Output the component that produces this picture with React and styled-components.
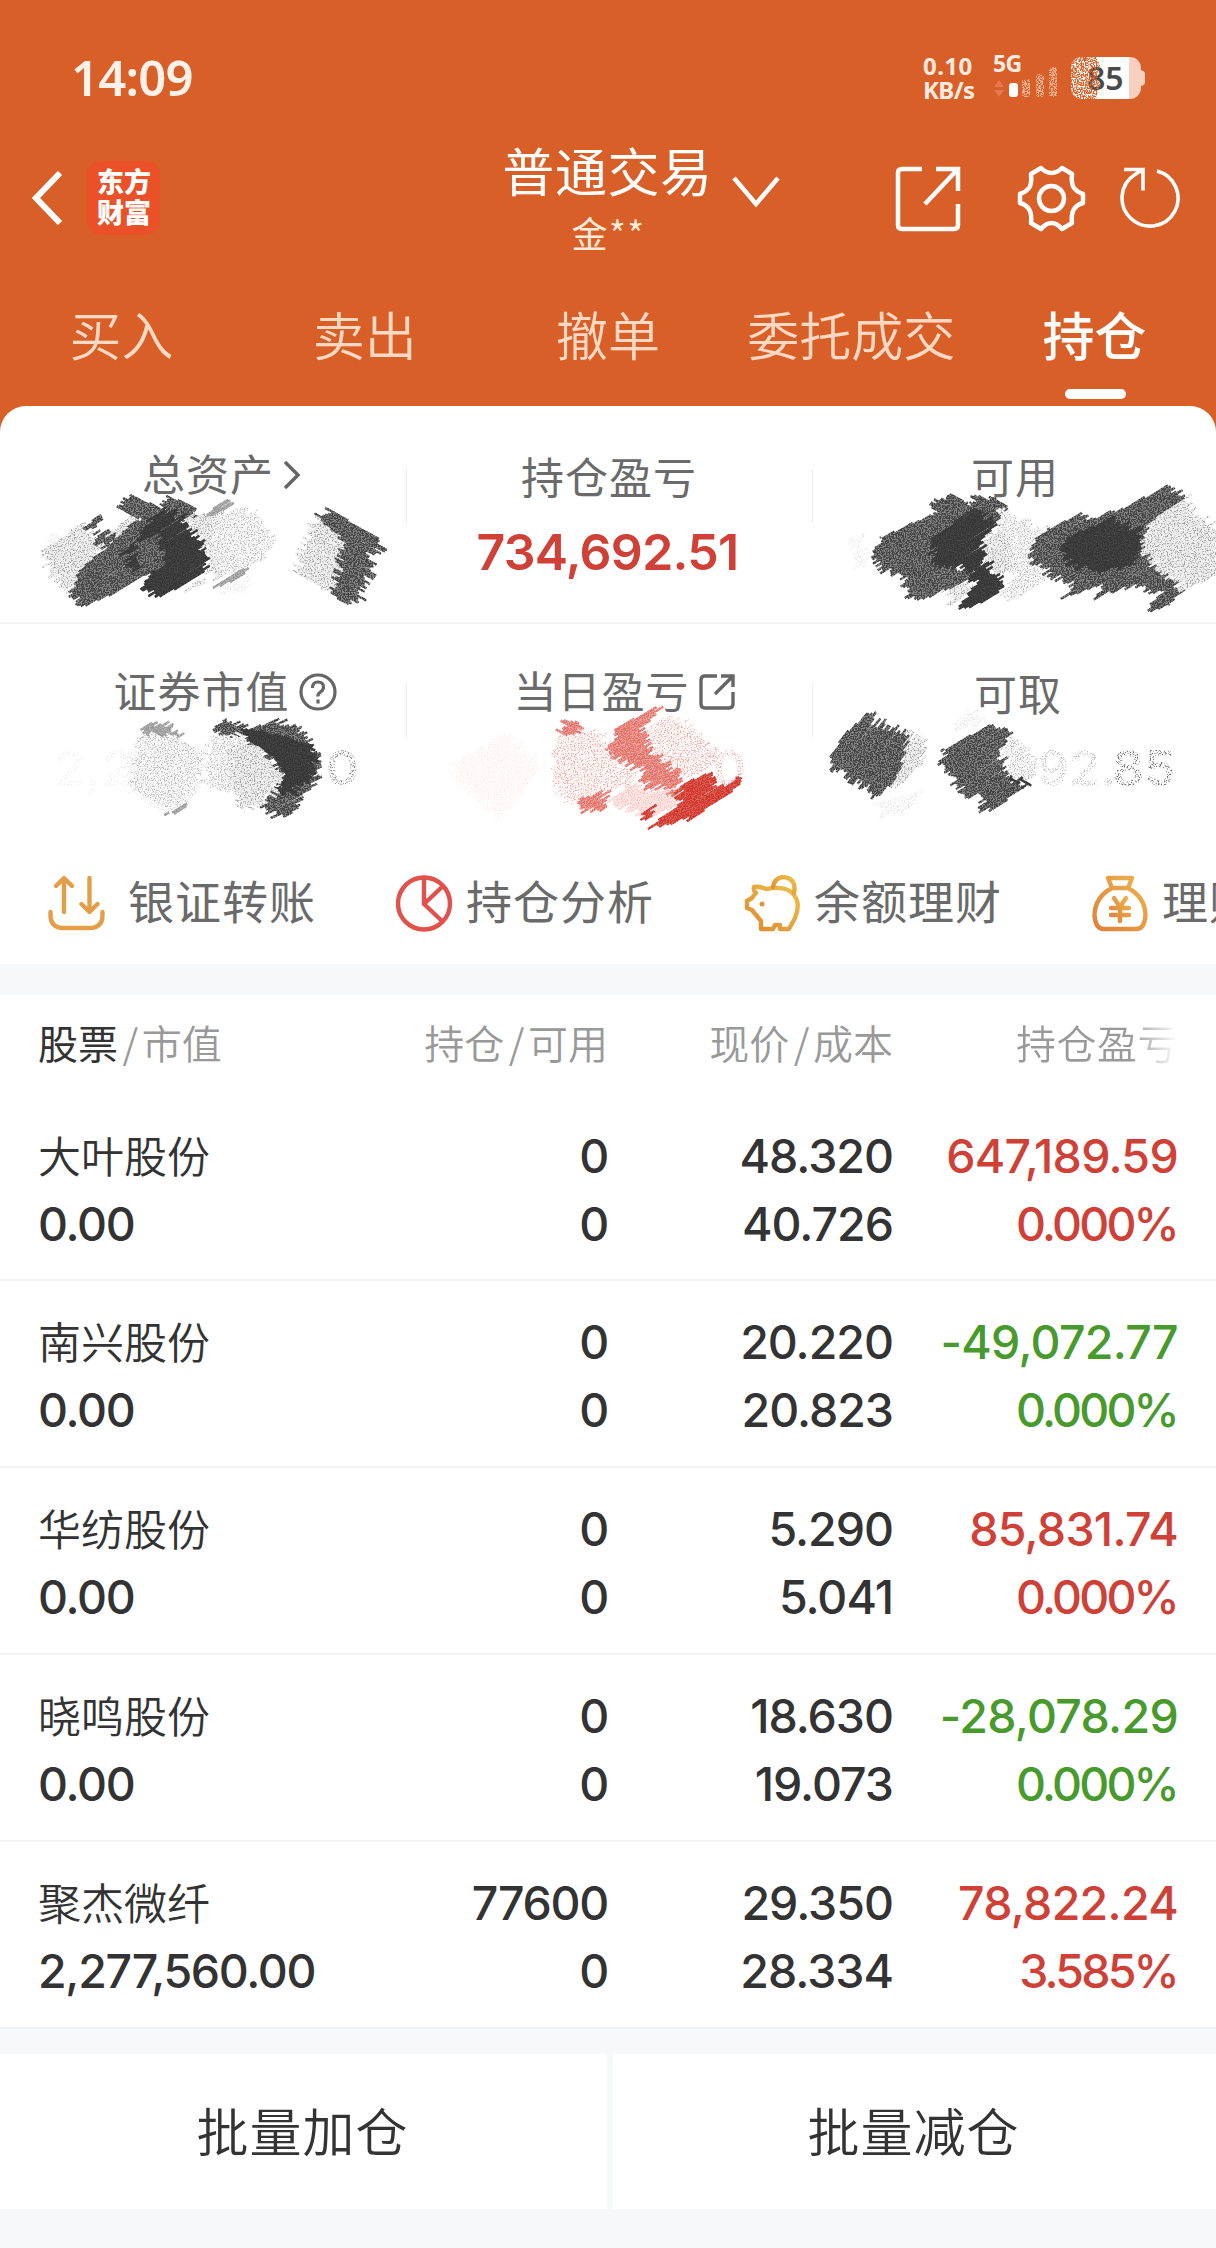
import React from 'react';
import styled, { createGlobalStyle } from 'styled-components';

const GlobalStyle = createGlobalStyle`
  * {
    box-sizing: border-box;
  }

  body {
    margin: 0;
    background: #f6f8fa;
    font-family: "Noto Sans CJK SC", "Noto Sans", sans-serif;
    color: #333;
  }
`;

const Page = styled.div`
  width: 1216px;
  height: 2248px;
  overflow: hidden;
  display: flex;
  flex-direction: column;
`;

/* ---------- Header ---------- */

const Header = styled.header`
  background: #d85f27;
  height: 436px; // The summary card overlaps the last 30px
  flex: none;
  color: #fff;
`;

const StatusBar = styled.div`
  height: 130px;
  padding: 26px 71px 0 71px;
  display: flex;
  align-items: center;
`;

const Clock = styled.span`
  font: 600 49px/60px "Noto Sans", sans-serif;
  letter-spacing: -0.8px;
  color: #fff1ea;
  margin-right: auto;
  padding-bottom: 2px;
`;

const NetSpeed = styled.div`
  font: 700 24px/24px "Noto Sans", sans-serif;
  letter-spacing: -0.6px;
  color: #ffeae0;
  width: 50px;
  white-space: nowrap;
  margin-right: 20px;

  span {
    display: block;
  }

  span:first-child {
    letter-spacing: 0.4px;
  }
`;

const SignalBlock = styled.div`
  width: 66px;
  height: 54px;
  margin-right: 12px;
  flex: none;
  display: grid;
`;

// 5G label sits in the corner above the signal bars
const SignalLabel = styled.div`
  grid-area: 1 / 1;
  font: 700 23px/24px "Noto Sans", sans-serif;
  letter-spacing: -0.6px;
  color: #ffeae0;
`;

const SignalBars = styled.svg`
  grid-area: 1 / 1;
  width: 66px;
  height: 50px;
  margin-top: 3px;
`;

const Battery = styled.svg`
  width: 74px;
  height: 44px;
  flex: none;
`;

const NavBar = styled.div`
  height: 140px;
  padding: 0 36px 0 32px;
  display: flex;
`;

const NavSide = styled.div`
  flex: 1;
  display: flex;
  align-items: center;
  padding-bottom: 5px;
`;

const Logo = styled.div`
  width: 73px;
  height: 74px;
  margin-left: 24px;
  padding: 4px 0 0 10px;
  border-radius: 14px;
  background: #ea5128;
  font-size: 27px;
  font-weight: 900;
  line-height: 31px;
`;

const TitleBlock = styled.div`
  width: 212px;
  padding: 8px 0 0 3px;
  display: flex;
  flex-direction: column;
  align-items: center;
  white-space: nowrap;
`;

const Title = styled.div`
  font-size: 52px;
  font-weight: 400;
  line-height: 64px;
  letter-spacing: 0.6px;
`;

const SubTitle = styled.div`
  font-size: 36px;
  line-height: 44px;
  padding: 8px 0 0 2px;
  letter-spacing: 1.5px;
  color: #ffe9d9;
`;

const NavIcon = styled.svg`
  width: ${(p) => p.$w}px;
  height: ${(p) => p.$h}px;
  margin-left: ${(p) => p.$ml || 0};
  margin-top: ${(p) => p.$mt || 0}px;
  fill: none;
  stroke: #fff;
  stroke-width: ${(p) => p.$stroke || 4.5};
  flex: none;
`;

const Tabs = styled.nav`
  display: grid;
  grid-template-columns: repeat(5, 1fr);
`;

const Tab = styled.div`
  display: flex;
  flex-direction: column;
  align-items: center;
  padding-top: 32px;
  font-size: 52px;
  line-height: 64px;
  font-weight: ${(p) => (p.$active ? 500 : 350)};
  color: ${(p) => (p.$active ? '#fff' : '#ffd9c3')};

  &::after {
    content: '';
    width: 61px;
    height: 10px;
    margin: 23px 0 0 2px;
    border-radius: 5px;
    background: ${(p) => (p.$active ? '#fff' : 'transparent')};
  }
`;

/* ---------- Summary ---------- */

const Summary = styled.section`
  position: relative;
  height: 558px;
  margin-top: -30px;
  flex: none;
  border-radius: 26px 26px 0 0;
  background: #fff;
  overflow: hidden;
`;

const SummaryRow = styled.div`
  display: grid;
  grid-template-columns: 407px 406px 403px;
  height: ${(p) => p.$height}px;
  padding-top: ${(p) => p.$top}px;
  border-bottom: ${(p) => (p.$line ? '2px solid #f2f2f3' : 'none')};
`;

const SummaryCell = styled.div`
  display: flex;
  flex-direction: column;
  align-items: center;
  background: linear-gradient(#ececec, #ececec) no-repeat right 28px / ${(p) => (p.$last ? 0 : 1)}px 54px;
`;

const SummaryLabel = styled.div`
  display: flex;
  align-items: center;
  height: 68px;
  margin-top: ${(p) => p.$shift || 0}px;
  padding-left: ${(p) => p.$indent || 0}px;
  padding-right: ${(p) => (p.$indent ? 0 : 2)}px;
  font-size: 43px;
  font-weight: 400;
  letter-spacing: 1px;
  color: #6a6a6a;

  svg {
    fill: none;
    stroke: #666;
    margin: 5px 0 0 9px;
  }
`;

const SummaryValue = styled.div`
  font: 600 50px/60px Inter, sans-serif;
  letter-spacing: -0.7px;
  color: #cf4037;
  margin-top: 13px;
  padding-right: 5px;
`;

const ScribbleLayer = styled.svg`
  position: absolute;
  left: 0;
  top: 0;
  width: 1216px;
  height: 558px;
  pointer-events: none;
`;

const HiddenDigits = styled.text`
  font: 600 50px Inter, sans-serif;
  fill: ${(p) => p.$color};
`;

const Actions = styled.div`
  display: flex;
  height: 118px;
  padding-left: 48px;
  align-items: center;
`;

const Action = styled.div`
  flex: 0 0 348px;
  display: flex;
  align-items: center;
  gap: ${(p) => p.$gap}px;
  font-size: 46px;
  letter-spacing: 1px;
  font-weight: 400;
  color: #6a6a6a;
  white-space: nowrap;

  svg {
    width: 57px;
    height: 57px;
    fill: none;
    stroke-width: 4.4;
    stroke-linecap: round;
    stroke-linejoin: round;
    flex: none;
  }

  span {
    padding-bottom: 8px;
  }
`;

/* ---------- Holdings ---------- */

const Holdings = styled.section`
  margin-top: 31px;
  height: 1033px;
  flex: none;
  background: #fff;
`;

const HoldingsHead = styled.div`
  display: grid;
  grid-template-columns: repeat(4, 285px);
  height: 99.7px;
  padding: 18px 38px 0;
  font-size: 40px;
  line-height: 58px;
  font-weight: 350;
  color: #999;

  span {
    text-align: right;
  }

  span:first-child {
    text-align: left;
  }

  b {
    font-weight: 400;
    color: #333;
  }

  i {
    font-style: normal;
    padding: 0 3.5px 0 4.5px;
  }
`;

const FadingLabel = styled.span`
  background: linear-gradient(90deg, #999 70%, #f4f4f4 97%);
  background-clip: text;
  color: transparent;
  letter-spacing: 0.5px;
`;

const HoldingRow = styled.div`
  display: grid;
  grid-template-columns: repeat(4, 285px);
  height: 186.8px;
  padding: 27px 38px 0;
  border-bottom: 2px solid #f3f3f4;
`;

const Pair = styled.div`
  display: flex;
  flex-direction: column;
  align-items: ${(p) => (p.$left ? 'flex-start' : 'flex-end')};
  font: 550 46.5px/68px Inter, sans-serif;
  letter-spacing: ${(p) => p.$spacing || -1.3}px;
  white-space: nowrap;
  color: ${(p) => p.$color || '#333'};
`;

const Percent = styled.span`
  letter-spacing: -2.8px;
  padding-right: 1px;
`;

const StockName = styled.span`
  font: 350 43px/64px "Noto Sans CJK SC", sans-serif;
  letter-spacing: 0;
  height: 68px;
`;

const Footer = styled.footer`
  display: grid;
  grid-template-columns: 607px 603px;
  gap: 6px;
  margin-top: 26px;
  height: 155px;
`;

const FooterButton = styled.button`
  border: 0;
  padding: 0 2px 4px 0;
  background: #fff;
  font: 350 52px "Noto Sans CJK SC", sans-serif;
  letter-spacing: 1px;
  color: #333;
`;

/* ---------- Data ---------- */

const RED = '#cf4037';
const GREEN = '#489a2c';

const tabs = ['买入', '卖出', '撤单', '委托成交', '持仓'];

const holdings = [
  { name: '大叶股份', value: '0.00', qty: '0', free: '0', price: '48.320', cost: '40.726', pnl: '647,189.59', pct: '0.000%', color: RED },
  { name: '南兴股份', value: '0.00', qty: '0', free: '0', price: '20.220', cost: '20.823', pnl: '-49,072.77', pct: '0.000%', color: GREEN },
  { name: '华纺股份', value: '0.00', qty: '0', free: '0', price: '5.290', cost: '5.041', pnl: '85,831.74', pct: '0.000%', color: RED },
  { name: '晓鸣股份', value: '0.00', qty: '0', free: '0', price: '18.630', cost: '19.073', pnl: '-28,078.29', pct: '0.000%', color: GREEN },
  { name: '聚杰微纤', value: '2,277,560.00', qty: '77600', free: '0', price: '29.350', cost: '28.334', pnl: '78,822.24', pct: '3.585%', color: RED },
];

// Pencil tones: base stroke color, grain color, grain filter
const tones = {
  dark: ['#858585', '#404040', 'dense'],
  solid: ['#444', '#353535', 'dense'],
  mid: ['#b4b4b4', '#999', 'dense'],
  light: ['#f0f0f0', '#a2a2a2', 'sparse'],
  haze: ['#f8f8f8', '#bebebe', 'sparse'],
  faint: ['#fdfdfd', '#e6e6e6', 'sparse'],
  deep: ['#dd5e55', '#cf352b', 'dense'],
  red: ['#efa09a', '#e27168', 'dense'],
  pale: ['#fbe4e2', '#f3c4c1', 'sparse'],
  pink: ['#fffafa', '#eea9a4', 'sparse'],
  blush: ['#fffdfd', '#fdecea', 'sparse'],
};

// Each group is drawn at 3x: [tone, angle, x1,y1, x2,y2, ...]
const scribbles = [
  {
    x: 0, y: -6,
    patches: [
      ['faint', -32, 650, 560, 750, 530, 740, 585, 680, 580],
      ['faint', -32, 130, 430, 160, 400, 180, 410, 150, 435],
      ['light', -32, 125, 450, 255, 365, 300, 440, 250, 540, 215, 575, 150, 520],
      ['light', -32, 325, 405, 400, 335, 430, 370, 340, 435],
      ['dark', -32, 250, 500, 400, 370, 480, 330, 440, 520, 380, 560, 260, 615, 205, 595],
      ['dark', -32, 250, 390, 295, 350, 300, 365, 270, 390],
      ['dark', -32, 290, 390, 340, 410, 330, 450, 290, 430],
      ['dark', 28, 350, 325, 405, 287, 480, 325, 460, 370, 400, 345],
      ['dark', 28, 480, 295, 540, 295, 595, 335, 560, 370, 500, 335],
      ['mid', -32, 610, 350, 680, 293, 710, 298, 640, 365],
      ['light', -32, 560, 350, 680, 340, 720, 400, 720, 470, 650, 540, 620, 500, 620, 430, 570, 390],
      ['haze', -32, 640, 350, 740, 320, 815, 410, 800, 480, 660, 530, 640, 450],
      ['light', -32, 555, 560, 620, 530, 610, 550, 570, 570],
      ['mid', -32, 640, 563, 735, 503, 742, 520, 690, 553],
      ['solid', -32, 370, 460, 430, 400, 450, 360, 500, 320, 545, 350, 550, 380, 580, 400, 625, 460, 622, 510, 540, 560, 460, 600, 430, 560, 460, 520, 390, 510],
      ['dark', -32, 410, 430, 470, 410, 500, 460, 470, 520, 430, 515, 400, 480],
      ['light', 28, 935, 370, 960, 350, 1060, 430, 1010, 560, 990, 580, 890, 520, 905, 460],
      ['dark', 28, 955, 350, 990, 330, 1125, 405, 1145, 440, 1110, 470, 1120, 495, 1080, 603, 1030, 605, 990, 580, 1020, 480, 1025, 410],
    ],
  },
  {
    x: 800, y: -6,
    patches: [
      ['faint', -32, 150, 420, 185, 400, 200, 500, 180, 510],
      ['dark', -32, 220, 470, 245, 410, 390, 345, 430, 330, 480, 300, 530, 340, 460, 420, 480, 500, 520, 530, 440, 570, 335, 605, 310, 540, 250, 510],
      ['dark', 28, 415, 293, 470, 290, 510, 320, 530, 295, 590, 295, 625, 325, 590, 370, 420, 370, 400, 330],
      ['light', -32, 430, 570, 490, 555, 515, 570, 460, 610],
      ['haze', -32, 600, 325, 680, 360, 730, 385, 690, 470, 755, 530, 640, 605, 610, 580, 640, 530, 560, 500, 545, 450, 590, 390],
      ['light', -32, 570, 400, 620, 390, 640, 500, 610, 520, 550, 480, 545, 440],
      ['solid', -32, 395, 410, 520, 330, 590, 370, 550, 420, 550, 480, 625, 545, 590, 580, 500, 630, 480, 620, 530, 550, 490, 500, 400, 490],
      ['dark', -32, 690, 455, 730, 395, 840, 338, 860, 355, 950, 335, 1090, 260, 1125, 270, 1155, 300, 1060, 360, 1030, 420, 1060, 490, 1155, 570, 1105, 615, 1040, 635, 1080, 580, 990, 560, 885, 595, 900, 560, 790, 595, 820, 550, 760, 530, 700, 490],
      ['solid', -32, 790, 420, 930, 355, 1030, 400, 1010, 490, 900, 520, 800, 490],
      ['light', -32, 1050, 370, 1160, 290, 1180, 340, 1260, 380, 1260, 520, 1150, 570, 1100, 520, 1050, 480, 1020, 430],
    ],
  },
  {
    x: 0, y: 234,
    patches: [
      ['faint', -32, 370, 340, 420, 330, 620, 320, 600, 440, 560, 500, 480, 520, 390, 450],
      ['mid', -32, 418, 300, 440, 250, 490, 250, 540, 285, 520, 315, 450, 290],
      ['haze', 28, 415, 310, 450, 280, 530, 290, 610, 340, 600, 400, 540, 500, 510, 510, 395, 445, 400, 370],
      ['mid', -32, 500, 520, 555, 490, 560, 500, 525, 525],
      ['dark', -25, 635, 270, 685, 235, 750, 265, 830, 240, 885, 265, 920, 300, 960, 365, 955, 410, 900, 490, 870, 528, 825, 528, 780, 500, 840, 430, 850, 400, 770, 330, 720, 290, 650, 285],
      ['solid', 28, 740, 265, 860, 290, 940, 320, 950, 390, 880, 460, 830, 470, 850, 400, 830, 360, 730, 290],
      ['haze', 28, 615, 340, 640, 285, 735, 285, 760, 350, 720, 470, 620, 440],
      ['light', 28, 700, 310, 760, 310, 800, 350, 840, 400, 825, 450, 785, 495, 720, 510, 690, 430],
    ],
  },
  {
    x: 400, y: 234,
    patches: [
      ['blush', -38, 150, 380, 310, 280, 430, 380, 300, 540, 200, 450],
      ['pink', -32, 455, 330, 480, 290, 600, 270, 650, 360, 700, 380, 700, 430, 620, 450, 520, 490, 470, 450],
      ['red', 28, 465, 275, 515, 238, 560, 255, 500, 285],
      ['red', -32, 525, 490, 560, 512, 605, 510, 620, 450, 560, 465],
      ['pale', -32, 630, 480, 700, 430, 760, 450, 840, 440, 830, 500, 760, 530, 690, 510],
      ['pink', -32, 740, 260, 820, 220, 920, 300, 960, 360, 900, 400, 840, 410, 760, 350],
      ['red', -32, 630, 310, 660, 260, 760, 200, 790, 205, 730, 260, 740, 310, 790, 360, 835, 400, 830, 460, 770, 440, 740, 450, 720, 390, 640, 355],
      ['deep', -32, 710, 525, 760, 500, 750, 530, 720, 535],
      ['deep', -32, 840, 435, 930, 395, 950, 430, 1000, 430, 1028, 400, 1020, 435, 880, 535, 850, 540, 745, 568, 785, 530, 835, 500],
    ],
  },
  {
    x: 800, y: 234,
    patches: [
      ['faint', -32, 440, 275, 500, 210, 560, 225, 550, 250],
      ['faint', -32, 220, 490, 370, 450, 320, 520, 250, 530],
      ['light', -52, 315, 280, 372, 310, 370, 370, 290, 440, 260, 415, 305, 370],
      ['dark', -52, 90, 350, 130, 290, 185, 235, 222, 212, 225, 245, 320, 270, 315, 340, 290, 410, 240, 470, 205, 460, 205, 435, 160, 430, 105, 390],
      ['haze', -32, 610, 320, 630, 280, 660, 310, 700, 350, 700, 420, 640, 425],
      ['dark', -32, 420, 380, 435, 325, 570, 255, 630, 270, 600, 340, 620, 400, 675, 440, 580, 510, 535, 517, 550, 475, 500, 465, 460, 425],
      ['solid', 28, 630, 405, 655, 425, 680, 420, 675, 437, 655, 440],
    ],
  },
];

// Small seeded generator so the strokes are the same on every render
function createRandom(seed) {
  let s = seed;
  return () => {
    s = (s * 16807) % 2147483647;
    return s / 2147483647;
  };
}

// Fills a polygon with parallel strokes that have ragged ends
function hatch(points, angle, seed) {
  const random = createRandom(seed * 7919);
  const a = (angle * Math.PI) / 180;
  const cos = Math.cos(a);
  const sin = Math.sin(a);
  const poly = [];
  for (let i = 0; i < points.length; i += 2) {
    poly.push([points[i] * cos + points[i + 1] * sin, points[i + 1] * cos - points[i] * sin]);
  }
  const min = Math.min(...poly.map((p) => p[1]));
  const max = Math.max(...poly.map((p) => p[1]));
  let d = '';
  for (let v = min + 1; v < max; v += 6) {
    const hits = [];
    poly.forEach(([x1, y1], i) => {
      const [x2, y2] = poly[(i + 1) % poly.length];
      if (y1 <= v !== y2 <= v) {
        hits.push(x1 + ((v - y1) / (y2 - y1)) * (x2 - x1));
      }
    });
    hits.sort((m, n) => m - n);
    for (let i = 0; i + 1 < hits.length; i += 2) {
      const u1 = hits[i] + (random() - 0.5) * 38;
      const u2 = hits[i + 1] + (random() - 0.5) * 38;
      if (u2 > u1) {
        // A slight tilt opens thin gaps between neighbouring strokes
        const v2 = v + (random() - 0.5) * 3;
        d += `M${(u1 * cos - v * sin).toFixed(1)} ${(u1 * sin + v * cos).toFixed(1)}`;
        d += `L${(u2 * cos - v2 * sin).toFixed(1)} ${(u2 * sin + v2 * cos).toFixed(1)}`;
      }
    }
  }
  return d;
}

function Scribbles() {
  return (
    <ScribbleLayer viewBox="0 0 1216 558">
      <defs>
        <filter id="dense" x="-5%" y="-5%" width="110%" height="110%" colorInterpolationFilters="sRGB">
          <feTurbulence type="fractalNoise" baseFrequency="0.75" numOctaves="2" seed="4" />
          <feColorMatrix values="0 0 0 0 0  0 0 0 0 0  0 0 0 0 0  7 0 0 0 -2.9" />
          <feComposite in="SourceGraphic" operator="in" />
        </filter>
        <filter id="sparse" x="-5%" y="-5%" width="110%" height="110%" colorInterpolationFilters="sRGB">
          <feTurbulence type="fractalNoise" baseFrequency="0.7" numOctaves="2" seed="9" />
          <feColorMatrix values="0 0 0 0 0  0 0 0 0 0  0 0 0 0 0  5 0 0 0 -2.5" />
          <feComposite in="SourceGraphic" operator="in" />
        </filter>
      </defs>
      <g filter="url(#sparse)">
        <HiddenDigits x="54" y="380" $color="#efefef">2,2</HiddenDigits>
        <HiddenDigits x="326" y="380" $color="#8a8a8a">0</HiddenDigits>
        <HiddenDigits x="474" y="380" $color="#f7dad8">1</HiddenDigits>
        <HiddenDigits x="713" y="380" $color="#efa9a4">0</HiddenDigits>
        <HiddenDigits x="1037" y="380" $color="#bdbdbd">92.</HiddenDigits>
        <HiddenDigits x="1112" y="380" $color="#6a6a6a">85</HiddenDigits>
      </g>
      {scribbles.map((group, g) => (
        <g key={g}>
          {group.patches.map(([tone, angle, ...points], i) => {
            const [base, grain, filter] = tones[tone];
            const d = hatch(points, angle, 97 * (g + 1) + 31 * i + 7);
            const transform = `translate(${group.x} ${group.y}) scale(0.33333)`;
            return (
              <React.Fragment key={i}>
                <path d={d} transform={transform} stroke={base} strokeWidth="7" fill="none" />
                <g filter={`url(#${filter})`}>
                  <path d={d} transform={transform} stroke={grain} strokeWidth="7" fill="none" />
                </g>
              </React.Fragment>
            );
          })}
        </g>
      ))}
    </ScribbleLayer>
  );
}

/* ---------- Icons ---------- */

const SignalIcon = () => (
  <SignalBars viewBox="0 0 66 50">
    <path d="M1 33l5-7 5 7zM1 36l5 7 5-7z" fill="#e67a4e" />
    <rect x="16" y="29" width="9" height="14" rx="3" fill="#fff" />
    <g fill="#f1b598" filter="url(#dense)">
      <rect x="29" y="25" width="8" height="18" rx="3" />
      <rect x="43" y="20" width="8" height="23" rx="3" />
      <rect x="56" y="13" width="8" height="30" rx="3" />
    </g>
  </SignalBars>
);

const BatteryIcon = () => (
  <Battery viewBox="0 0 74 44">
    <rect x="0" y="1" width="70" height="42" rx="11" fill="#f7d0c0" />
    <path d="M70 14q4 1 4 4v8q0 3-4 4z" fill="#f7d0c0" />
    <path d="M11 1h47v42H11a11 11 0 0 1-11-11V12A11 11 0 0 1 11 1z" fill="#fff" />
    <text x="16" y="34" fontSize="32" fontWeight="600" fontFamily="Noto Sans" fill="#4a4a4a">85</text>
    <g filter="url(#dense)">
      <path d="M11 1h14l4 8-3 10 3 10-4 14H11a11 11 0 0 1-11-11V12A11 11 0 0 1 11 1z" fill="#d85f27" />
    </g>
  </Battery>
);

const TransferIcon = () => (
  <svg viewBox="0 0 57 57" stroke="#e39f47">
    <path d="M16 37V4M8 11l8-8 8 8M41.500 3v33M33.500 29l8 8 8-8M2.500 37v3q0 13 13 13h26q13 0 13-13v-3" />
  </svg>
);

const PieIcon = () => (
  <svg viewBox="0 0 57 57" stroke="#e0524b">
    <circle cx="28" cy="28.500" r="26" />
    <path d="M28 4v25l18-17M28 29l18 17" />
  </svg>
);

const PigIcon = () => (
  <svg viewBox="0 0 57 57" stroke="url(#pigGold)">
    <defs>
      <linearGradient id="pigGold" x1="0" y1="1" x2="1" y2="0">
        <stop offset="0" stopColor="#dc8a33" />
        <stop offset="1" stopColor="#efc14a" />
      </linearGradient>
    </defs>
    <path d="M10 12q6-1 12 2 21-4 28 6 7 9 1 23L45 54H36v-4h-5l-2 4H17v-8L8 35l-5-2v-7l5-3q2-3 4-5-3-3-2-6z" />
    <path d="M29 12q2-10 11-10 13 2 10 16" />
    <circle cx="18" cy="29" r="2.500" fill="#e0953a" stroke="none" />
  </svg>
);

const BagIcon = () => (
  <svg viewBox="0 0 57 57" stroke="url(#bagGold)">
    <defs>
      <linearGradient id="bagGold" x1="0" y1="1" x2="1" y2="0">
        <stop offset="0" stopColor="#de8238" />
        <stop offset="1" stopColor="#ecb350" />
      </linearGradient>
    </defs>
    <path d="M16 3h24l-4 10H20zM20 13Q3 22 2.500 40q1 14 9 14h33q8 0 9-14-.5-18-17.500-27" />
    <path d="M22 23l6 9 6-9M28 32v14M19 33h18M19 40h18" />
  </svg>
);

const actions = [
  { label: '银证转账', gap: 23, icon: <TransferIcon /> },
  { label: '持仓分析', gap: 13, icon: <PieIcon /> },
  { label: '余额理财', gap: 13, icon: <PigIcon /> },
  { label: '理财产品', gap: 13, icon: <BagIcon /> },
];

export default function App() {
  return (
    <Page>
      <GlobalStyle />
      <Header>
        <StatusBar>
          <Clock>14:09</Clock>
          <NetSpeed>
            <span>0.10</span>
            <span>KB/s</span>
          </NetSpeed>
          <SignalBlock>
            <SignalLabel>5G</SignalLabel>
            <SignalIcon />
          </SignalBlock>
          <BatteryIcon />
        </StatusBar>
        <NavBar>
          <NavSide>
            <NavIcon $w={31} $h={54} $stroke={6} viewBox="0 0 31 54">
              <path d="M28 2L4 27l24 25" />
            </NavIcon>
            <Logo>东方<br />财富</Logo>
          </NavSide>
          <TitleBlock>
            <Title>普通交易</Title>
            <SubTitle>金**</SubTitle>
          </TitleBlock>
          <NavSide>
            {/* Account switcher arrow */}
            <NavIcon $w={48} $h={32} $ml="20px" $mt={-12} viewBox="0 0 48 32">
              <path d="M2 2l22 26L46 2" />
            </NavIcon>
            {/* Share */}
            <NavIcon $w={66} $h={66} $ml="auto" $mt={3} viewBox="0 0 66 66">
              <path d="M27 3H7q-4 0-4 4v52q0 4 4 4h52q4 0 4-4V38M41 3h22v22M62 4L30 38" />
            </NavIcon>
            {/* Settings */}
            <NavIcon $w={69} $h={67} $ml="56px" $mt={1} viewBox="0 0 69 67">
              <path
                d="M24 3q5 5 10.500 5T45 3l10 6q-1 10 2 14t9 6v9q-7 2-9.500 7T55 58l-10 6q-5-6-10.500-6T24 64l-10-6q1-8-1.500-13T3 38v-9q6-2 9-6t2-14z"
                strokeLinejoin="round"
              />
              <circle cx="34.500" cy="33.500" r="12.500" />
            </NavIcon>
            {/* Refresh */}
            <NavIcon $w={60} $h={62} $ml="34px" $stroke={3.6} viewBox="0 0 60 62">
              <path d="M37 4a28 28 0 1 1-22 3.500L23 2.500M4 2.500h19v21" />
            </NavIcon>
          </NavSide>
        </NavBar>
        <Tabs>
          {tabs.map((tab) => (
            <Tab key={tab} $active={tab === '持仓'}>{tab}</Tab>
          ))}
        </Tabs>
      </Header>

      <Summary>
        <SummaryRow $height={218} $top={35} $line>
          <SummaryCell>
            <SummaryLabel $shift={-3} $indent={36}>
              总资产
              <svg width="18" height="30" viewBox="0 0 18 30" strokeWidth="3.500">
                <path d="M2 2l13 13L2 28" />
              </svg>
            </SummaryLabel>
          </SummaryCell>
          <SummaryCell>
            <SummaryLabel>持仓盈亏</SummaryLabel>
            <SummaryValue>734,692.51</SummaryValue>
          </SummaryCell>
          <SummaryCell $last>
            <SummaryLabel $indent={1}>可用</SummaryLabel>
          </SummaryCell>
        </SummaryRow>
        <SummaryRow $height={220} $top={31}>
          <SummaryCell>
            <SummaryLabel $indent={43}>
              证券市值
              <svg width="38" height="38" viewBox="0 0 38 38" strokeWidth="3.200">
                <circle cx="19" cy="19" r="17" />
                <path d="M13.500 15q0-6 5.500-6t5.500 5q0 3-3 5t-2.500 4.500M19 26.500v4" />
              </svg>
            </SummaryLabel>
          </SummaryCell>
          <SummaryCell>
            <SummaryLabel $indent={28}>
              当日盈亏
              <svg width="36" height="36" viewBox="0 0 36 36" strokeWidth="3.400">
                <path d="M18 2H6Q2 2 2 6v24q0 4 4 4h24q4 0 4-4V18M22 2h12v11M33 3L16 20" />
              </svg>
            </SummaryLabel>
          </SummaryCell>
          <SummaryCell $last>
            <SummaryLabel $shift={3} $indent={7}>可取</SummaryLabel>
          </SummaryCell>
        </SummaryRow>
        <Actions>
          {actions.map((action) => (
            <Action key={action.label} $gap={action.gap}>
              {action.icon}
              <span>{action.label}</span>
            </Action>
          ))}
        </Actions>
        <Scribbles />
      </Summary>

      <Holdings>
        <HoldingsHead>
          <span><b>股票</b><i>/</i>市值</span>
          <span>持仓<i>/</i>可用</span>
          <span>现价<i>/</i>成本</span>
          <span><FadingLabel>持仓盈亏</FadingLabel></span>
        </HoldingsHead>
        {holdings.map((item) => (
          <HoldingRow key={item.name}>
            <Pair $left>
              <StockName>{item.name}</StockName>
              <span>{item.value}</span>
            </Pair>
            <Pair>
              <span>{item.qty}</span>
              <span>{item.free}</span>
            </Pair>
            <Pair $spacing={-1}>
              <span>{item.price}</span>
              <span>{item.cost}</span>
            </Pair>
            <Pair $color={item.color} $spacing={-0.7}>
              <span>{item.pnl}</span>
              <Percent>{item.pct}</Percent>
            </Pair>
          </HoldingRow>
        ))}
      </Holdings>

      <Footer>
        <FooterButton>批量加仓</FooterButton>
        <FooterButton>批量减仓</FooterButton>
      </Footer>
    </Page>
  );
}
